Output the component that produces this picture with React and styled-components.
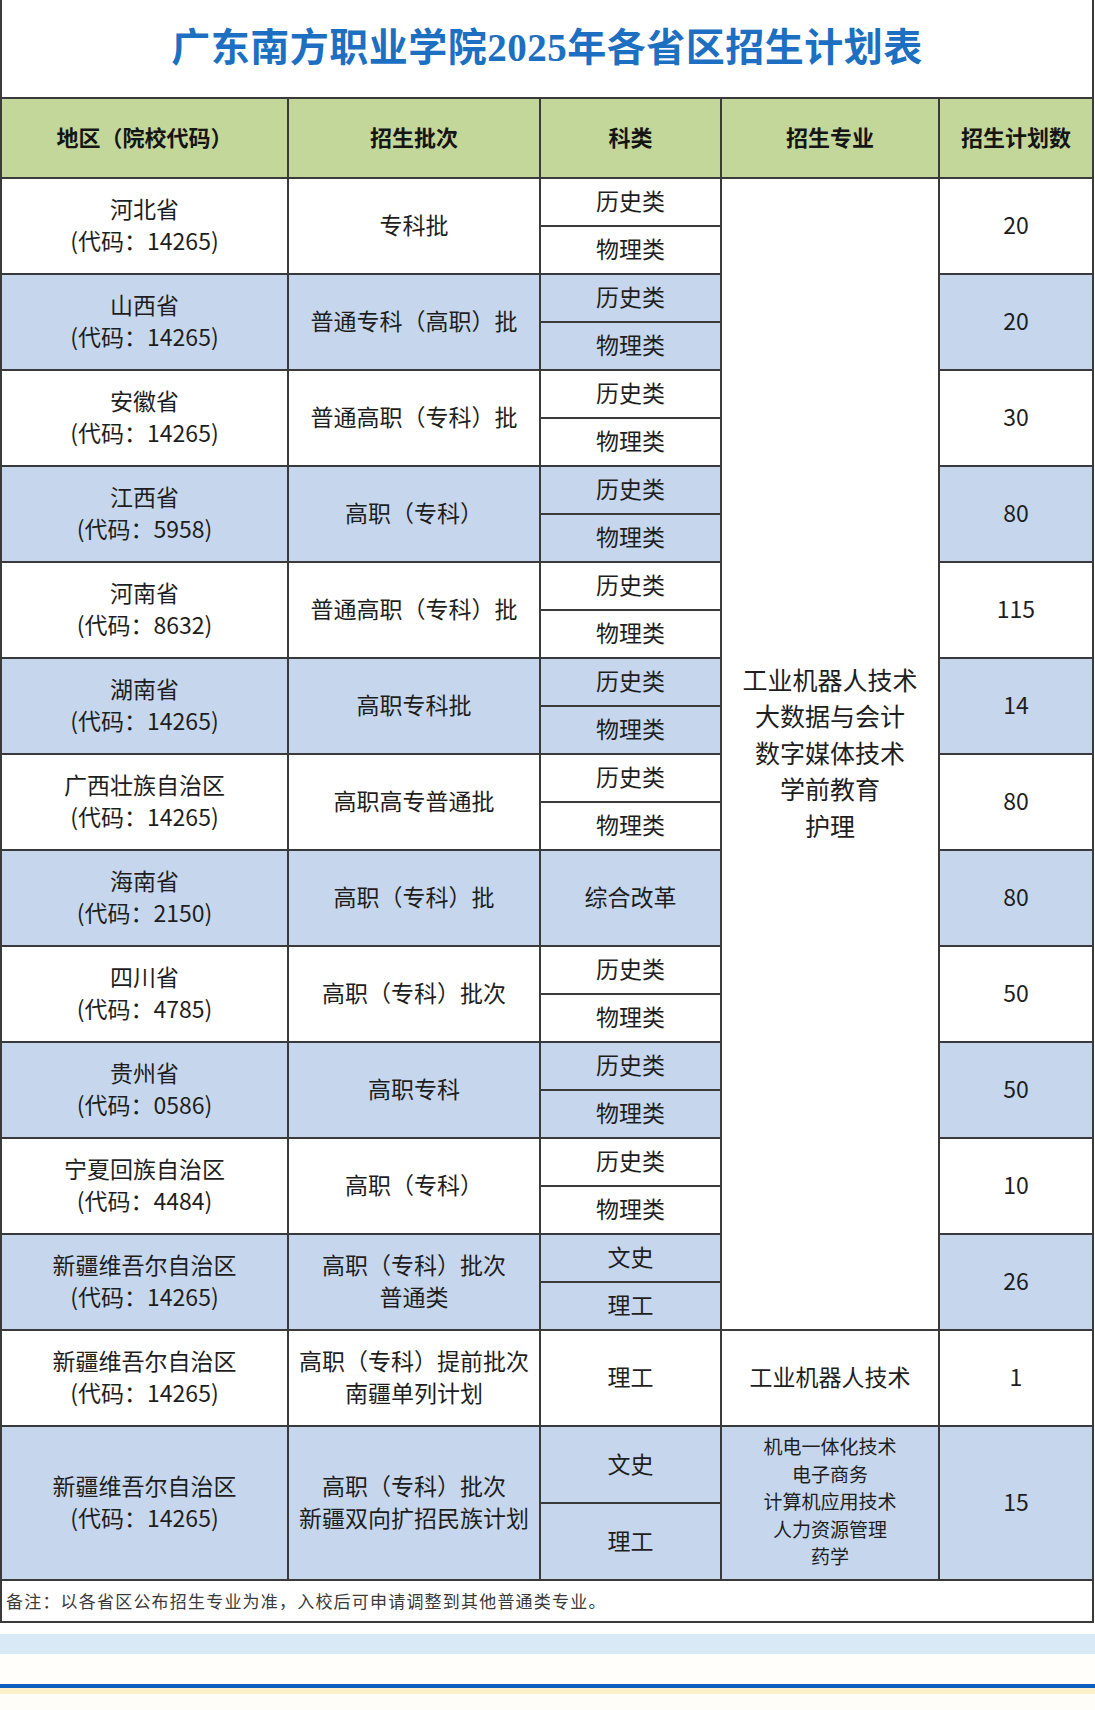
import React from 'react';
import styled, { createGlobalStyle } from 'styled-components';

const Global = createGlobalStyle`
  html, body { margin: 0; padding: 0; background: #ffffff; }
  body { font-family: "Noto Sans CJK SC", "Noto Sans", sans-serif; color: #222; }
`;

const Page = styled.div`
  width: 1095px;
  min-height: 1710px;
  display: flex;
  flex-direction: column;
  background: #fffdf7;
`;

const Sheet = styled.div`
  width: 1094px;
  background: #ffffff;
`;

const TitleBar = styled.div`
  height: 97px;
  box-sizing: border-box;
  border-left: 2px solid #3a3a3a;
  border-right: 2px solid #3a3a3a;
  display: flex;
  align-items: center;
  justify-content: center;
  padding-bottom: 10px;
  font-family: "Liberation Serif", "Noto Sans CJK SC", serif;
  font-weight: 700;
  font-size: 39px;
  letter-spacing: 0.5px;
  color: #1c6fc1;
`;

const Table = styled.table`
  width: 1094px;
  border-collapse: collapse;
  table-layout: fixed;
`;

const Row = styled.tr`
  height: ${p => p.$h}px;
`;

const HeadCell = styled.th`
  border: 2px solid #3a3a3a;
  background: #c4d79b;
  font-weight: 700;
  font-size: 22px;
  color: #151515;
  text-align: center;
  vertical-align: middle;
  padding: 0 0 4px 0;
`;

const Cell = styled.td`
  border: 2px solid #3a3a3a;
  background: ${p => (p.$shade ? '#c6d7ed' : '#ffffff')};
  text-align: center;
  vertical-align: middle;
  padding: 0 0 4px 0;
  font-size: ${p => p.$size || 23}px;
  line-height: ${p => p.$lh || 32}px;
  color: #1e1e1e;
  white-space: nowrap;
  overflow: hidden;
`;

const NoteCell = styled.td`
  border: 2px solid #3a3a3a;
  background: #ffffff;
  text-align: left;
  vertical-align: middle;
  padding: 0 0 2px 4px;
  font-family: "Liberation Serif", "Noto Sans CJK SC", serif;
  font-size: 17px;
  letter-spacing: 1.2px;
  color: #3a3a3a;
`;

const Line = styled.div`
  display: block;
`;

const Band = styled.div`
  height: ${p => p.$h}px;
  background: ${p => p.$c};
`;

const Fill = styled.div`
  flex: 1;
  background: #fffdf7;
`;

const rows = [
  { name: '河北省', code: '14265', batch: ['专科批'], subj: ['历史类', '物理类'], n: '20' },
  { name: '山西省', code: '14265', batch: ['普通专科（高职）批'], subj: ['历史类', '物理类'], n: '20' },
  { name: '安徽省', code: '14265', batch: ['普通高职（专科）批'], subj: ['历史类', '物理类'], n: '30' },
  { name: '江西省', code: '5958', batch: ['高职（专科）'], subj: ['历史类', '物理类'], n: '80' },
  { name: '河南省', code: '8632', batch: ['普通高职（专科）批'], subj: ['历史类', '物理类'], n: '115' },
  { name: '湖南省', code: '14265', batch: ['高职专科批'], subj: ['历史类', '物理类'], n: '14' },
  { name: '广西壮族自治区', code: '14265', batch: ['高职高专普通批'], subj: ['历史类', '物理类'], n: '80' },
  { name: '海南省', code: '2150', batch: ['高职（专科）批'], subj: ['综合改革'], n: '80' },
  { name: '四川省', code: '4785', batch: ['高职（专科）批次'], subj: ['历史类', '物理类'], n: '50' },
  { name: '贵州省', code: '0586', batch: ['高职专科'], subj: ['历史类', '物理类'], n: '50' },
  { name: '宁夏回族自治区', code: '4484', batch: ['高职（专科）'], subj: ['历史类', '物理类'], n: '10' },
  { name: '新疆维吾尔自治区', code: '14265', batch: ['高职（专科）批次', '普通类'], subj: ['文史', '理工'], n: '26' },
  { name: '新疆维吾尔自治区', code: '14265', batch: ['高职（专科）提前批次', '南疆单列计划'], subj: ['理工'], n: '1', major: ['工业机器人技术'] },
  {
    name: '新疆维吾尔自治区', code: '14265', batch: ['高职（专科）批次', '新疆双向扩招民族计划'], subj: ['文史', '理工'], n: '15',
    major: ['机电一体化技术', '电子商务', '计算机应用技术', '人力资源管理', '药学'], tall: true,
  },
];

const sharedMajors = ['工业机器人技术', '大数据与会计', '数字媒体技术', '学前教育', '护理'];

const Lines = ({ items }) => items.map((t, i) => <Line key={i}>{t}</Line>);

export default function App() {
  const body = [];
  rows.forEach((r, i) => {
    const shade = i % 2 === 1;
    const h = r.tall ? 77 : 48;
    const split = r.subj.length === 2;
    body.push(
      <Row key={`${i}a`} $h={h}>
        <Cell rowSpan={2} $shade={shade}>
          <Line>{r.name}</Line>
          <Line>(代码：{r.code})</Line>
        </Cell>
        <Cell rowSpan={2} $shade={shade}>
          <Lines items={r.batch} />
        </Cell>
        <Cell rowSpan={split ? 1 : 2} $shade={shade}>{r.subj[0]}</Cell>
        {i === 0 && (
          <Cell rowSpan={24} $size={25} $lh={36.4}>
            <Lines items={sharedMajors} />
          </Cell>
        )}
        {r.major && (
          <Cell rowSpan={2} $shade={shade} $size={r.tall ? 19 : 23} $lh={r.tall ? 27.6 : 32}>
            <Lines items={r.major} />
          </Cell>
        )}
        <Cell rowSpan={2} $shade={shade}>{r.n}</Cell>
      </Row>
    );
    body.push(
      <Row key={`${i}b`} $h={h}>
        {split && <Cell $shade={shade}>{r.subj[1]}</Cell>}
      </Row>
    );
  });

  return (
    <>
      <Global />
      <Page>
        <Sheet>
          <TitleBar>广东南方职业学院2025年各省区招生计划表</TitleBar>
          <Table>
            <colgroup>
              <col style={{ width: 287 }} />
              <col style={{ width: 252 }} />
              <col style={{ width: 181 }} />
              <col style={{ width: 218 }} />
              <col style={{ width: 154 }} />
            </colgroup>
            <thead>
              <Row $h={80}>
                <HeadCell>地区（院校代码）</HeadCell>
                <HeadCell>招生批次</HeadCell>
                <HeadCell>科类</HeadCell>
                <HeadCell>招生专业</HeadCell>
                <HeadCell>招生计划数</HeadCell>
              </Row>
            </thead>
            <tbody>
              {body}
              <Row $h={42}>
                <NoteCell colSpan={5}>备注：以各省区公布招生专业为准，入校后可申请调整到其他普通类专业。</NoteCell>
              </Row>
            </tbody>
          </Table>
        </Sheet>
        <Band $h={11} $c="#ffffff" />
        <Band $h={20} $c="#d9e9f5" />
        <Band $h={30} $c="#fffefb" />
        <Band $h={4} $c="#0b5fbf" />
        <Band $h={6} $c="#fdf0c8" />
        <Fill />
      </Page>
    </>
  );
}
